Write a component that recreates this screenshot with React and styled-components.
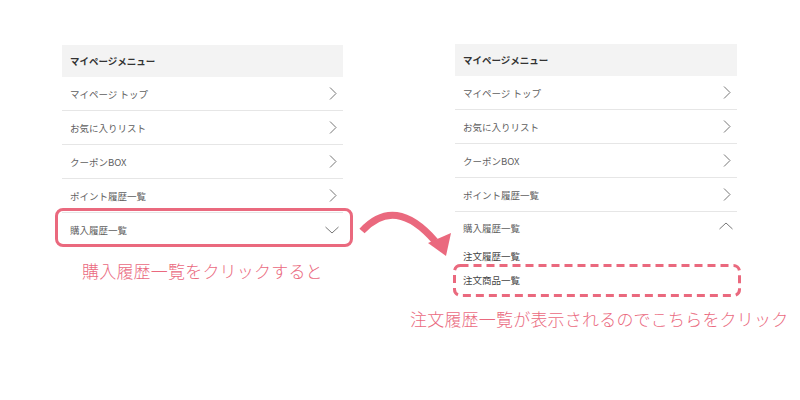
import React from "react";
import styled, { createGlobalStyle } from "styled-components";

const Global = createGlobalStyle`
  html, body { margin: 0; padding: 0; background: #fff; }
  body { font-family: "Noto Sans CJK JP", "Noto Sans", sans-serif; }
`;

const PINK = "#ea697e";

const Page = styled.div`
  position: relative;
  width: 800px;
  height: 400px;
  display: flex;
  align-items: flex-start;
  padding-left: 62px;
  gap: 112px;
  box-sizing: border-box;
`;

const Column = styled.div`
  width: ${(p) => p.$w}px;
  padding-top: ${(p) => p.$top}px;
  display: flex;
  flex-direction: column;
`;

const Menu = styled.div`
  display: flex;
  flex-direction: column;
`;

const Header = styled.div`
  height: 32px;
  background: #f3f3f3;
  display: flex;
  align-items: center;
  padding-left: 8px;
  font-size: 9.5px;
  font-weight: 700;
  color: #333;
`;

const Row = styled.div`
  position: relative;
  height: ${(p) => (p.$last ? "34px" : "33px")};
  border-bottom: ${(p) => (p.$last ? "none" : "1px solid #e6e6e6")};
  display: flex;
  align-items: center;
  justify-content: space-between;
  padding: 0 6px 0 8px;
  font-size: 9.5px;
  color: #5f5f5f;
`;

const SubItem = styled.div`
  position: relative;
  height: 24px;
  display: flex;
  align-items: center;
  padding-left: 8px;
  font-size: 9.5px;
  color: #444;
`;

const Highlight = styled.div`
  position: absolute;
  left: -7px;
  right: -10px;
  top: -5px;
  bottom: 0;
  border: 3px solid ${PINK};
  border-radius: 8px;
  pointer-events: none;
`;

const DashedFrame = styled.svg`
  position: absolute;
  left: -2px;
  top: -4px;
  width: calc(100% + 6px);
  height: calc(100% + 9px);
  overflow: visible;
  pointer-events: none;
`;

const Caption = styled.div`
  margin-top: ${(p) => p.$mt}px;
  margin-left: ${(p) => p.$ml}px;
  font-size: 17px;
  line-height: 24px;
  font-weight: 300;
  color: ${PINK};
  white-space: nowrap;
  letter-spacing: 0.2px;
`;

const ArrowSvg = styled.svg`
  position: absolute;
  left: 355px;
  top: 205px;
  width: 100px;
  height: 60px;
  overflow: visible;
`;

const Chevron = ({ dir = "right" }) => {
  if (dir === "right")
    return (
      <svg width="8" height="13" viewBox="0 0 8 13">
        <polyline points="1,0.5 7,6.5 1,12.5" fill="none" stroke="#777" strokeWidth="1" />
      </svg>
    );
  if (dir === "down")
    return (
      <svg width="14" height="8" viewBox="0 0 14 8" style={{ marginRight: -2 }}>
        <polyline points="0.5,1 7,7 13.5,1" fill="none" stroke="#777" strokeWidth="1" />
      </svg>
    );
  return (
    <svg width="14" height="8" viewBox="0 0 14 8" style={{ marginRight: -2, marginTop: -4 }}>
      <polyline points="0.5,7 7,1 13.5,7" fill="none" stroke="#777" strokeWidth="1" />
    </svg>
  );
};

const items = ["マイページ トップ", "お気に入りリスト", "クーポンBOX", "ポイント履歴一覧"];

export default function App() {
  return (
    <>
      <Global />
      <Page>
        <Column $w={281} $top={45}>
          <Menu>
            <Header>マイページメニュー</Header>
            {items.map((t) => (
              <Row key={t}>
                <span>{t}</span>
                <Chevron />
              </Row>
            ))}
            <Row $last>
              <span>購入履歴一覧</span>
              <Chevron dir="down" />
              <Highlight />
            </Row>
          </Menu>
          <Caption $mt={12} $ml={20}>購入履歴一覧をクリックすると</Caption>
        </Column>
        <Column $w={282} $top={44}>
          <Menu>
            <Header>マイページメニュー</Header>
            {items.map((t) => (
              <Row key={t}>
                <span>{t}</span>
                <Chevron />
              </Row>
            ))}
            <Row $last style={{ height: 32 }}>
              <span>購入履歴一覧</span>
              <Chevron dir="up" />
            </Row>
            <SubItem>注文履歴一覧</SubItem>
            <SubItem>
              注文商品一覧
              <DashedFrame>
                <rect
                  x="1.5"
                  y="1.5"
                  style={{ width: "calc(100% - 3px)", height: "calc(100% - 3px)" }}
                  rx="6"
                  fill="none"
                  stroke={PINK}
                  strokeWidth="3"
                  strokeDasharray="8 5"
                />
              </DashedFrame>
            </SubItem>
          </Menu>
          <Caption $mt={15} $ml={-45}>注文履歴一覧が表示されるのでこちらをクリック</Caption>
        </Column>
        <ArrowSvg viewBox="0 0 100 60">
          <path d="M7 26 Q 40 -10 80 36" fill="none" stroke={PINK} strokeWidth="7" />
          <polygon points="73,38 96,28 91,51" fill={PINK} />
        </ArrowSvg>
      </Page>
    </>
  );
}
